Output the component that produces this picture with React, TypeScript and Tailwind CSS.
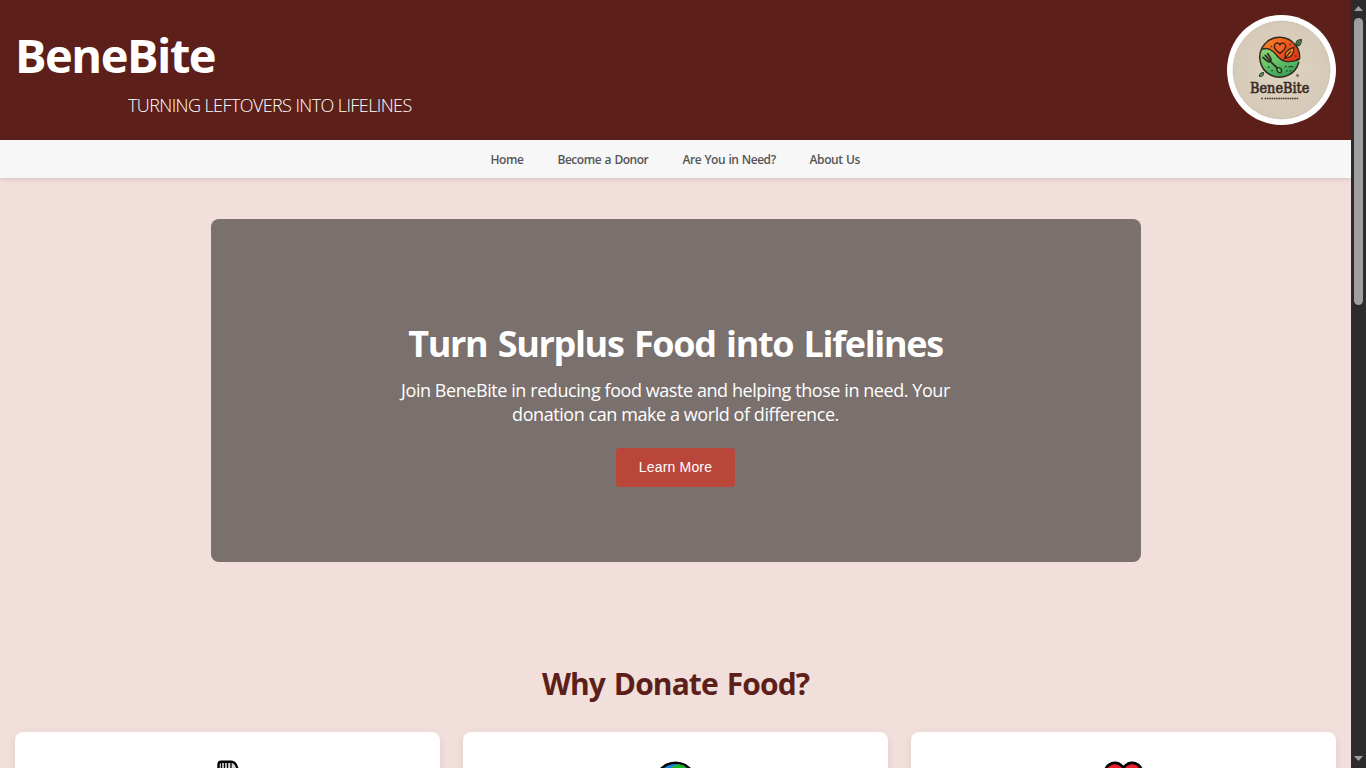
import type { ReactNode } from 'react';

function Logo() {
  return (
    <svg viewBox="0 0 110 110" preserveAspectRatio="none" className="block h-[110px] w-[109px]" role="img" aria-label="BeneBite logo">
      <defs>
        <linearGradient id="top" x1="0" y1="0" x2="1" y2="0.6">
          <stop offset="0" stopColor="#f79a2c" />
          <stop offset="0.5" stopColor="#f4661f" />
          <stop offset="1" stopColor="#e23a17" />
        </linearGradient>
        <linearGradient id="bottom" x1="0.3" y1="0" x2="0.6" y2="1">
          <stop offset="0" stopColor="#a5dc7c" />
          <stop offset="0.55" stopColor="#68c56a" />
          <stop offset="1" stopColor="#2b9a58" />
        </linearGradient>
        <radialGradient id="paper">
          <stop offset="0" stopColor="#dfd4c1" />
          <stop offset="1" stopColor="#d5c9b7" />
        </radialGradient>
        <clipPath id="disc"><circle cx="53.3" cy="42.3" r="20" /></clipPath>
      </defs>
      <circle cx="55" cy="55" r="55" fill="#fff" />
      <circle cx="55" cy="55" r="48.9" fill="url(#paper)" stroke="#a99b8b" strokeWidth="0.6" strokeDasharray="1.5 1" />
      <g clipPath="url(#disc)">
        <rect x="32" y="20" width="44" height="45" fill="url(#bottom)" />
        <path d="M32 36C38 32 44 33 49 39C55 47 61 49 74 44V20H32Z" fill="url(#top)" stroke="#372a20" strokeWidth="1.3" />
      </g>
      <path d="M72.5 47A20 20 0 1 1 69.3 30.5Q74 36 73.2 43.5L70 45" fill="none" stroke="#372a20" strokeWidth="1.5" />
      <path d="M53.5 38.4C48.5 35 47.4 32.7 47.8 30.6C48.4 27.6 52 27.1 53.5 29.8C55.2 27 58.8 27.8 59.2 31C59.4 33 57 35.7 53.5 38.4Z" fill="#f36326" stroke="#402417" strokeWidth="1.4" />
      <path d="M58.6 42.8C57.5 36.5 62 34 67.5 32.4C68 38 65 43.5 58.6 42.8ZM57.4 44.4L64.5 36.2" fill="#f58a2b" stroke="#402417" strokeWidth="1.3" />
      <path d="M36.4 42.5L41 46.3C42.8 47.5 45 46 44.3 43.9L41.2 38.8M38.7 40.4L44.7 47.3L51.2 53.4" fill="none" stroke="#302b20" strokeWidth="1.7" strokeLinecap="round" />
      <ellipse cx="52.7" cy="55.2" rx="2.1" ry="2.7" transform="rotate(-35 52.7 55.2)" fill="#71bb65" stroke="#302b20" strokeWidth="1.3" />
      <path d="M41 52.2h2M44.5 55.6h2M58.3 51.6h2M62 51.6h5M59.5 55.8h1.8M63 55.8h1.8M44 31.5h1.5M63 29.5h1.5M68.5 41h1.5" stroke="#35452c" strokeWidth="1.3" />
      <path d="M69.7 31C68.5 26.5 71.3 24.5 75 24.6C75.5 28.5 73.5 31.4 69.7 31ZM69.7 31L73 27" fill="#58915f" stroke="#293c29" strokeWidth="1.1" />
      <path d="M32.7 61.4C32.3 58.6 34.5 57.6 37 57.5C37 60.6 35.7 62 32.7 61.4Z" fill="#60935a" stroke="#293c29" strokeWidth="1" />
      <circle cx="71.2" cy="60.5" r="1.1" fill="#8c7b65" stroke="#4e4436" strokeWidth="0.6" />
      <text x="23.2" y="78.3" textLength="60" lengthAdjust="spacingAndGlyphs" fill="#3a2b23" stroke="#3a2b23" strokeWidth="0.65" fontFamily="'DejaVu Serif', serif" fontSize="14">BeneBite</text>
      <path d="M34.5 83.5h2M38 83.5h34" stroke="#46382e" strokeWidth="1.4" strokeDasharray="1.6 0.7" />
    </svg>
  );
}

function Fork() {
  return (
    <svg viewBox="0 0 48 48" className="block h-12 w-12">
      <path d="M14.5 29V5Q14.5 1.8 17 1.8H27Q33.8 2 33.8 14V29Z" fill="#d5d5d5" stroke="#000" strokeWidth="2.4" />
      <path d="M17.5 3V29M20.5 3V29M23.5 3V29M27 3V29" stroke="#000" strokeWidth="1.3" />
    </svg>
  );
}

function Globe() {
  return (
    <svg viewBox="0 0 48 48" className="block h-12 w-12">
      <circle cx="23.5" cy="22.5" r="19.8" fill="#1c83dc" stroke="#000" strokeWidth="2.6" />
      <path d="M20 7L25 4.5L31 5L38 11L36 18L26 15L22 11L17 12Z" fill="#22b727" />
      <path d="M10 12L15 8L18 9L14 14Z" fill="#22b727" />
    </svg>
  );
}

function Heart() {
  return (
    <svg viewBox="0 0 48 48" className="block h-12 w-12">
      <path d="M23.5 42L6.5 23C-1.5 7.5 14.5-4 23.5 7.5C32.5-4 48.5 7.5 40.5 23Z" fill="#eb1c2d" stroke="#000" strokeWidth="2.6" />
    </svg>
  );
}

function Card({ children }: { children: ReactNode }) {
  return (
    <article className="flex h-[260px] w-[425px] justify-center rounded-lg bg-white pt-[28px] shadow-[0_3px_8px_rgba(0,0,0,0.09)]">
      {children}
    </article>
  );
}

function ScrollBar() {
  return (
    <aside className="flex h-full w-[15px] shrink-0 flex-col items-center bg-[#2c2c2c]">
      <svg viewBox="0 0 15 18" className="block h-[18px] w-[15px] shrink-0"><path d="M3 11L7.5 6L12 11Z" fill="#9f9f9f" /></svg>
      <div className="h-[287px] w-[9px] shrink-0 rounded-full bg-[#9f9f9f]" />
      <div className="grow" />
      <svg viewBox="0 0 15 18" className="block h-[18px] w-[15px] shrink-0"><path d="M3 6L7.5 11L12 6Z" fill="#9f9f9f" /></svg>
    </aside>
  );
}

export default function App() {
  return (
    <div className="flex h-screen w-full overflow-hidden bg-[#f2dfdc] font-['Open_Sans','Noto_Sans',sans-serif]">
      <div className="h-full w-[1351px] shrink-0 overflow-hidden">
        <header className="flex h-[140px] justify-between bg-[#5c1f19] pr-[15px] pl-[15px] text-white">
          <div className="pt-[25px]">
            <h1 className="h-[60px] text-[47px] leading-[60px] font-bold tracking-[-1.5px] whitespace-nowrap">BeneBite</h1>
            <p className="mt-[8px] ml-[113px] text-[18px] leading-6 font-light tracking-[-0.6px] whitespace-nowrap">TURNING LEFTOVERS INTO LIFELINES</p>
          </div>
          <div className="pt-[15px]"><Logo /></div>
        </header>
        <nav className="relative flex h-[38px] justify-center gap-[34px] bg-[#f7f7f7] text-[12px] leading-[39px] font-semibold whitespace-nowrap text-[#555] shadow-[0_2px_4px_rgba(0,0,0,0.1)]">
          <a className="w-[33px] tracking-[-0.4px]">Home</a>
          <a className="w-[91px] tracking-[-0.48px] [word-spacing:0.8px]">Become a Donor</a>
          <a className="w-[93px] tracking-[-0.45px] [word-spacing:0.6px]">Are You in Need?</a>
          <a className="w-[51px] tracking-[-0.38px] [word-spacing:0.5px]">About Us</a>
        </nav>
        <main className="pt-[41px]">
          <section className="mx-auto flex h-[343px] w-[930px] flex-col items-center rounded-lg bg-[#7a706d] pt-[101px] text-white">
            <h2 className="text-[36px] leading-[48px] font-bold tracking-[-1.35px] [word-spacing:2.4px] whitespace-nowrap">Turn Surplus Food into Lifelines</h2>
            <p className="mt-[10px] text-center text-[18px] leading-6 tracking-[-0.43px] whitespace-nowrap">
              Join BeneBite in reducing food waste and helping those in need. Your<br />donation can make a world of difference.
            </p>
            <button className="mt-[22px] h-[39px] w-[119px] rounded bg-[#ba4539] pb-[2px] font-['Liberation_Sans',sans-serif] text-[14px] leading-5 tracking-[0.17px]">Learn More</button>
          </section>
          <section className="pt-[102px]">
            <h2 className="text-center text-[30px] leading-[40px] font-bold tracking-[-0.9px] [word-spacing:2px] text-[#5c1f19]">Why Donate Food?</h2>
            <div className="mt-[28px] flex gap-[23px] px-[15px]">
              <Card><Fork /></Card>
              <Card><Globe /></Card>
              <Card><Heart /></Card>
            </div>
          </section>
        </main>
      </div>
      <ScrollBar />
    </div>
  );
}
